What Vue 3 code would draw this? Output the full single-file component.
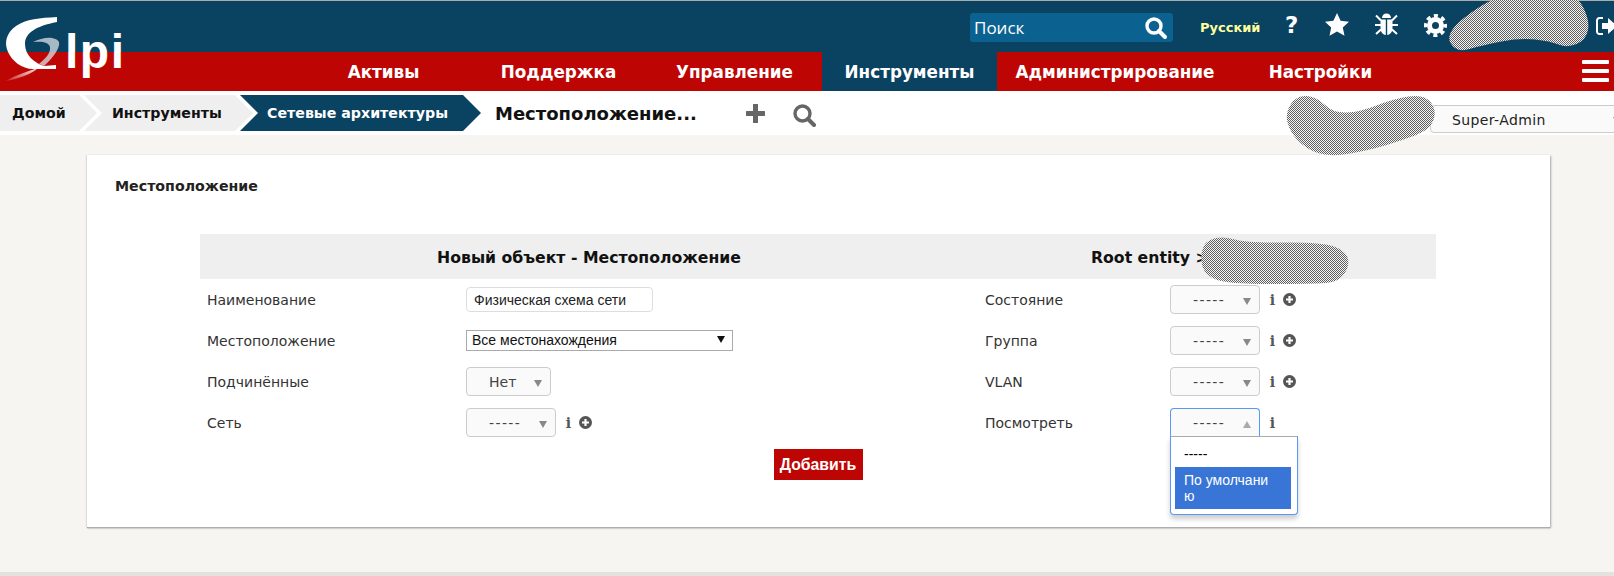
<script setup>
const menu = ['Активы', 'Поддержка', 'Управление', 'Инструменты', 'Администрирование', 'Настройки']

const leftRows = [
  { label: 'Наименование', kind: 'input' },
  { label: 'Местоположение', kind: 'native' },
  { label: 'Подчинённые', kind: 'yesno' },
  { label: 'Сеть', kind: 'drop', plus: true, narrow: true },
]
const rightRows = [
  { label: 'Состояние', plus: true },
  { label: 'Группа', plus: true },
  { label: 'VLAN', plus: true },
  { label: 'Посмотреть', plus: false, open: true },
]

// blurred-out names from the screenshot, outlines as points
const blots = [
  [[1445, 33], [1483, 3], [1513, -8], [1575, -8], [1590, 20], [1586, 40], [1567, 48], [1550, 41], [1520, 38], [1483, 45], [1456, 53]],
  [[1285, 113], [1297, 95], [1317, 97], [1333, 113], [1360, 112], [1393, 99], [1424, 94], [1437, 110], [1430, 130], [1400, 141], [1370, 150], [1330, 157], [1306, 149], [1290, 132]],
  [[1200, 258], [1205, 241], [1223, 236], [1247, 243], [1320, 242], [1345, 250], [1350, 265], [1339, 282], [1313, 284], [1227, 284], [1205, 275]],
]

function smooth(pts) {
  let d = ''
  pts.forEach((p, i) => {
    const next = pts[(i + 1) % pts.length]
    const mid = [(p[0] + next[0]) / 2, (p[1] + next[1]) / 2]
    if (i === 0) {
      const last = pts[pts.length - 1]
      d += 'M' + (p[0] + last[0]) / 2 + ' ' + (p[1] + last[1]) / 2
    }
    d += ' Q' + p[0] + ' ' + p[1] + ' ' + mid[0] + ' ' + mid[1]
  })
  return d + 'Z'
}
</script>

<template>
  <div class="page">
    <header class="top">
      <div class="search">
        <span>Поиск</span>
        <svg width="24" height="24" viewBox="0 0 24 24"><circle cx="10" cy="10" r="7" fill="none" stroke="#fff" stroke-width="3.4" /><path d="M15 15l6 6" stroke="#fff" stroke-width="4" stroke-linecap="round" /></svg>
      </div>
      <span class="lang">Русский</span>
      <span class="help">?</span>
      <svg class="star" width="24" height="23" viewBox="0 0 24 23"><path d="M12 0l3.6 7.7 8.4 1-6.200 5.700 1.700 8.300L12 18.600 4.500 22.700l1.700-8.300L0 8.700l8.400-1z" fill="#fff" /></svg>
      <svg class="bug" width="23" height="23" viewBox="0 0 23 23" fill="#fff">
        <path d="M7 5a4.500 4.500 0 0 1 9 0z" />
        <path d="M5.500 6.500h5.300V22C7.500 21.500 5.500 19 5.500 15zM12.200 6.500h5.300V15c0 4-2 6.500-5.300 7z" />
        <path d="M1 2.500l5 5M22 2.500l-5 5M0 12h6M23 12h-6M1 21l5-4.500M22 21l-5-4.500" stroke="#fff" stroke-width="2" />
      </svg>
      <svg class="cog" width="23" height="23" viewBox="0 0 23 23">
        <circle cx="11.500" cy="11.500" r="6" fill="none" stroke="#fff" stroke-width="5" />
        <circle cx="11.500" cy="11.500" r="9.800" fill="none" stroke="#fff" stroke-width="3.400" stroke-dasharray="4.100 3.600" stroke-dashoffset="2" />
      </svg>
      <svg class="logout" width="24" height="18" viewBox="0 0 24 18" fill="#fff">
        <path d="M7 1H3.500A2.500 2.500 0 0 0 1 3.500v11A2.500 2.500 0 0 0 3.500 17H7" fill="none" stroke="#fff" stroke-width="2" />
        <path d="M6 6h6V1l9 8-9 8v-5H6z" />
      </svg>
    </header>

    <nav class="menu">
      <a v-for="item in menu" :key="item" :class="{ active: item === 'Инструменты' }">{{ item }}</a>
      <div class="burger"><i></i><i></i><i></i></div>
    </nav>

    <!-- logo sits across both header bands -->
    <svg class="logo" width="124" height="74" viewBox="0 0 124 74">
      <defs>
        <linearGradient id="tail" x1="0" x2="1" y1="1" y2="0">
          <stop offset="0" stop-color="#fff" stop-opacity="0.15" />
          <stop offset="1" stop-color="#fff" stop-opacity="0.9" />
        </linearGradient>
      </defs>
      <path d="M57 0C40 1 26 2 16 9 6 16 4 26 8 35c4 9 14 17 25 17l23 0 0-4-12 1C34 46 25 38 25 27 25 16 36 9 57 5z" fill="#fff" />
      <path d="M33 25c6-3 14-5 19-4 5 1 8 3 7 7-1 6-8 15-15 21l-5-2c6-5 12-11 11-17-1-5-8-6-17-5z" fill="#dbe3e8" fill-opacity="0.75" />
      <path d="M6 64c10-6 22-10 32-13-6 6-20 11-32 13z" fill="url(#tail)" />
      <text x="65" y="51" class="logo-text" textLength="59" lengthAdjust="spacing">lpi</text>
    </svg>

    <div class="trail">
      <a class="crumb first">Домой</a>
      <a class="crumb">Инструменты</a>
      <a class="crumb current">Сетевые архитектуры</a>
      <h1>Местоположение...</h1>
      <svg class="act-plus" width="19" height="19" viewBox="0 0 19 19"><path d="M9.500 1v17M1 9.500h17" stroke="#666" stroke-width="5" stroke-linecap="round" /></svg>
      <svg class="act-search" width="23" height="23" viewBox="0 0 23 23"><circle cx="9.500" cy="9.500" r="7.500" fill="none" stroke="#666" stroke-width="3.400" /><path d="M15 15l6 6" stroke="#666" stroke-width="4" stroke-linecap="round" /></svg>
      <div class="profile">Super-Admin<b class="arrow"></b></div>
    </div>

    <main class="body">
      <section class="card">
        <h2>Местоположение</h2>
        <div class="form">
          <div class="head left">Новый объект - Местоположение</div>
          <div class="head right">Root entity &gt;</div>

          <template v-for="(row, i) in leftRows" :key="row.label">
            <label>{{ row.label }}</label>
            <div class="field">
              <input v-if="row.kind === 'input'" class="text" value="Физическая схема сети" />
              <div v-else-if="row.kind === 'native'" class="native">Все местонахождения<b></b></div>
              <div v-else-if="row.kind === 'yesno'" class="drop yesno">Нет<b class="arrow"></b></div>
              <template v-else>
                <div class="drop">-----<b class="arrow"></b></div>
                <span class="info">i</span>
                <svg class="plus" width="13" height="13" viewBox="0 0 13 13"><circle cx="6.500" cy="6.500" r="6.500" fill="#555" /><path d="M6.500 3v7M3 6.500h7" stroke="#fff" stroke-width="2.200" /></svg>
              </template>
            </div>
            <label>{{ rightRows[i].label }}</label>
            <div class="field">
              <div class="drop" :class="{ open: rightRows[i].open }">
                -----<b class="arrow"></b>
                <div v-if="rightRows[i].open" class="options">
                  <div class="opt">-----</div>
                  <div class="opt hit">По умолчани<br />ю</div>
                </div>
              </div>
              <span class="info">i</span>
              <svg v-if="rightRows[i].plus" class="plus" width="13" height="13" viewBox="0 0 13 13"><circle cx="6.500" cy="6.500" r="6.500" fill="#555" /><path d="M6.500 3v7M3 6.500h7" stroke="#fff" stroke-width="2.200" /></svg>
            </div>
          </template>

          <div class="submit"><button>Добавить</button></div>
        </div>
      </section>
    </main>
    <div class="foot"></div>

    <!-- scribbled-over names -->
    <svg class="blots" width="1614" height="576">
      <defs>
        <pattern id="dither" width="2" height="2" patternUnits="userSpaceOnUse">
          <rect width="2" height="2" fill="#f4f4f4" />
          <rect width="1" height="1" fill="#606060" />
          <rect x="1" y="1" width="1" height="1" fill="#606060" />
        </pattern>
      </defs>
      <path v-for="(b, i) in blots" :key="i" :d="smooth(b)" fill="url(#dither)" />
    </svg>
  </div>
</template>

<style scoped>
.page {
  position: relative;
  width: 1614px;
  height: 576px;
  overflow: hidden;
  background: #f6f5f1;
  font-family: "DejaVu Sans", sans-serif;
  font-size: 14px;
  color: #333;
  display: flex;
  flex-direction: column;
}
.top {
  height: 51px;
  flex: none;
  border-top: 1px solid #aaa;
  background: #0a4261;
  display: flex;
  align-items: flex-start;
  padding-left: 970px;
}
.top > * { flex: none; }
.search {
  width: 203px;
  height: 29px;
  margin-top: 12px;
  box-sizing: border-box;
  padding: 0 5px 0 4px;
  background: #0b6291;
  border-radius: 3px;
  color: #fff;
  font-family: "Open Sans", sans-serif;
  font-size: 17px;
  display: flex;
  align-items: center;
  justify-content: space-between;
}
.lang {
  margin: 19px 0 0 27px;
  width: 59px;
  color: #ffff9e;
  font-weight: bold;
  font-size: 13px;
  white-space: nowrap;
}
.help {
  margin: 9px 0 0 26px;
  width: 14px;
  color: #fff;
  font-weight: bold;
  font-size: 23px;
  line-height: 30px;
}
.star { margin: 12px 0 0 26px; }
.bug { margin: 12px 0 0 26px; }
.cog { margin: 13px 0 0 26px; }
.logout { margin: 16px 0 0 149px; }
.menu {
  height: 39px;
  flex: none;
  background: #bd0604;
  display: grid;
  grid-template-columns: 173px 177px 175px 175px 236px 175px 1fr;
  padding-left: 297px;
  align-items: stretch;
}
.menu a {
  color: #fff;
  font-weight: bold;
  font-size: 16.800px;
  text-align: center;
  line-height: 41px;
  white-space: nowrap;
}
.menu a.active { background: #0a4261; }
.burger {
  justify-self: end;
  margin: 8px 5px 0 0;
  width: 27px;
}
.burger i {
  display: block;
  height: 4px;
  background: #fff;
  margin-bottom: 5px;
  border-radius: 1px;
}
.logo {
  position: absolute;
  left: 0;
  top: 17px;
}
.logo-text {
  font-family: "Liberation Sans", sans-serif;
  font-size: 48px;
  font-weight: bold;
  fill: #fff;
}
.trail {
  height: 44px;
  flex: none;
  box-sizing: border-box;
  padding-top: 4px;
  background: #fff;
  display: flex;
  align-items: flex-start;
}
.crumb {
  height: 36px;
  line-height: 37px;
  background: #efefef;
  color: #111;
  font-weight: bold;
  font-size: 14.200px;
  width: 169px;
  box-sizing: border-box;
  padding-left: 28px;
  margin-left: -13px;
  white-space: nowrap;
  clip-path: polygon(0 0, calc(100% - 18px) 0, 100% 50%, calc(100% - 18px) 100%, 0 100%, 18px 50%);
}
.crumb.first {
  width: 97px;
  margin-left: 0;
  padding-left: 12px;
  clip-path: polygon(0 0, calc(100% - 18px) 0, 100% 50%, calc(100% - 18px) 100%, 0 100%);
}
.crumb.current {
  width: 241px;
  padding-left: 27px;
  background: #0a4261;
  color: #fff;
}
.trail h1 {
  margin: 0 0 0 14px;
  width: 251px;
  font-size: 18px;
  line-height: 38px;
  color: #111;
  white-space: nowrap;
}
.act-plus { margin: 9px 0 0 0; }
.act-search { margin: 9px 0 0 28px; }
.profile {
  margin: 10px -14px 0 auto;
  width: 198px;
  height: 28px;
  flex: none;
  box-sizing: border-box;
  padding-left: 21px;
  line-height: 29px;
  letter-spacing: 0.4px;
  background: #fafafa;
  border: 1px solid #ccc;
  border-radius: 4px;
  position: relative;
  color: #222;
}
.profile .arrow { right: 6px; top: 11px; }
.arrow {
  position: absolute;
  width: 0;
  height: 0;
  border-left: 4px solid transparent;
  border-right: 4px solid transparent;
  border-top: 7px solid #888;
}
.body {
  flex: 1;
  padding: 20px 64px 0 87px;
}
.card {
  width: 1463px;
  height: 372px;
  box-sizing: border-box;
  padding: 21px 114px 0 113px;
  background: #fff;
  box-shadow: -1px 0 1px #ddd, 1px 1px 2px #aaa, 0 1px 1px #999;
}
.card h2 {
  margin: 0 0 38px -85px;
  font-size: 14.200px;
  line-height: 20px;
  color: #222;
}
.form {
  display: grid;
  grid-template-columns: 259px 519px 185px 273px;
  grid-template-rows: 45px repeat(5, 41px);
}
.head {
  line-height: 47px;
  background: #efefef;
  font-weight: bold;
  font-size: 15.700px;
  color: #111;
  grid-column: span 2;
}
.head.left { text-align: center; }
.head.right { padding-left: 113px; }
.form label {
  padding-left: 7px;
  align-self: center;
  line-height: 20px;
}
.field {
  display: flex;
  align-items: center;
  padding-left: 7px;
  position: relative;
}
.text {
  width: 187px;
  height: 25px;
  box-sizing: border-box;
  padding: 0 7px;
  border: 1px solid #ddd;
  border-radius: 4px;
  font-family: "Liberation Sans", sans-serif;
  font-size: 14px;
  color: #222;
  outline: none;
}
.native {
  width: 267px;
  height: 21px;
  box-sizing: border-box;
  padding-left: 5px;
  line-height: 19px;
  border: 1px solid #aaa;
  font-family: "Liberation Sans", sans-serif;
  font-size: 14px;
  color: #111;
  position: relative;
}
.native b {
  position: absolute;
  right: 7px;
  top: 5px;
  border-left: 4px solid transparent;
  border-right: 4px solid transparent;
  border-top: 7px solid #111;
}
.drop {
  position: relative;
  width: 90px;
  height: 29px;
  box-sizing: border-box;
  padding-left: 22px;
  line-height: 29px;
  letter-spacing: 1.4px;
  background: #fafafa;
  border: 1px solid #ccc;
  border-radius: 4px;
  color: #444;
  flex: none;
}
.drop .arrow { right: 8px; top: 12px; }
.drop.yesno {
  width: 85px;
  letter-spacing: 0;
}
.drop.open {
  border-color: #5897fb;
  border-bottom-color: transparent;
  border-radius: 4px 4px 0 0;
}
.drop.open .arrow {
  border-top: 0;
  border-bottom: 7px solid #aaa;
}
.options {
  position: absolute;
  left: -1px;
  top: 27px;
  width: 128px;
  height: 79px;
  box-sizing: border-box;
  padding: 5px 6px 5px 4px;
  background: #fff;
  border: 1px solid #5897fb;
  border-top-color: #aaa;
  border-radius: 0 0 4px 4px;
  box-shadow: 0 4px 5px rgba(0, 0, 0, 0.2);
  z-index: 2;
  font-family: "Liberation Sans", sans-serif;
  font-size: 14px;
  letter-spacing: 0;
}
.opt {
  padding: 0 9px;
  height: 25px;
  line-height: 25px;
  color: #000;
}
.opt.hit {
  height: 42px;
  line-height: 16px;
  padding-top: 5px;
  box-sizing: border-box;
  background: #3875d7;
  color: #fff;
}
.info {
  margin-left: 8px;
  width: 9px;
  font-family: "DejaVu Serif", serif;
  font-weight: bold;
  font-size: 14px;
  color: #555;
  line-height: 16px;
  text-align: center;
}
.plus {
  margin: 0 0 0 6px;
}
.submit {
  grid-column: 1 / -1;
  display: flex;
  justify-content: center;
  align-items: flex-start;
  padding-top: 6px;
}
.submit button {
  width: 89px;
  height: 31px;
  border: 0;
  padding: 0;
  background: #bd0604;
  color: #fff;
  font-family: "Liberation Sans", sans-serif;
  font-weight: bold;
  font-size: 15.800px;
}
.foot {
  height: 4px;
  flex: none;
  background: #e3e2dc;
}
.blots {
  position: absolute;
  left: 0;
  top: 0;
  pointer-events: none;
}
</style>
